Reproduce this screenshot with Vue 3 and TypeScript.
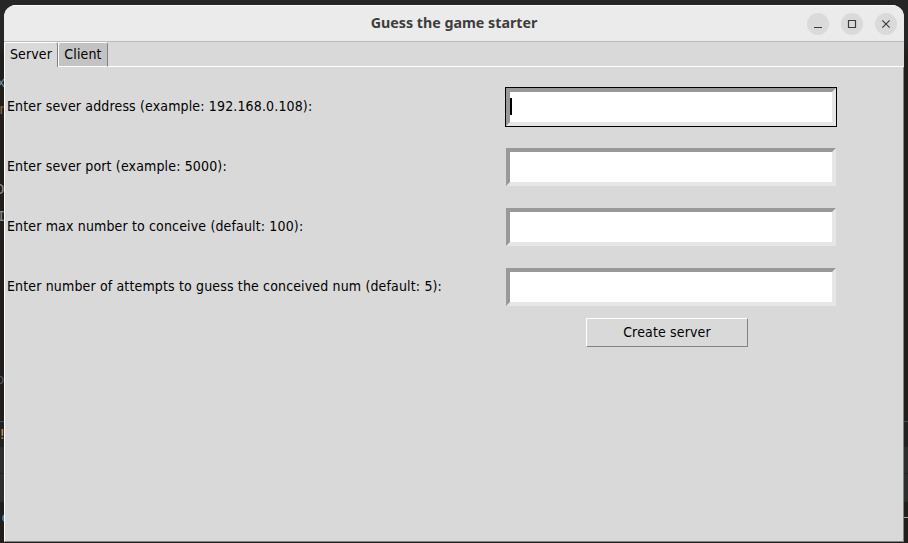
<script setup lang="ts">
import { ref } from 'vue'

interface Field {
  id: string
  label: string
  value: string
}

const tabs: string[] = ['Server', 'Client']
const activeTab = ref<string>('Server')
const fields = ref<Field[]>([
  { id: 'address', label: 'Enter sever address (example: 192.168.0.108):', value: '' },
  { id: 'port', label: 'Enter sever port (example: 5000):', value: '' },
  { id: 'max', label: 'Enter max number to conceive (default: 100):', value: '' },
  { id: 'attempts', label: 'Enter number of attempts to guess the conceived num (default: 5):', value: '' },
])
const focused = ref<string>('address')
</script>

<template>
  <div class="desktop">
    <div class="backdrop" aria-hidden="true">
      <span class="frag x">x</span>
      <span class="frag r">r</span>
      <span class="frag o">D</span>
      <span class="frag i">I</span>
      <span class="frag c">o</span>
      <div class="panel"></div>
      <span class="frag bang">!</span>
      <span class="dot"></span>
      <div class="rule"></div>
    </div>
    <section class="window">
      <header class="titlebar">
        <h1 class="title">Guess the game starter</h1>
        <div class="controls">
          <button class="control" aria-label="Minimize">
            <svg viewBox="0 0 22 22"><path d="M7 14.5h8" /></svg>
          </button>
          <button class="control" aria-label="Maximize">
            <svg viewBox="0 0 22 22"><path d="M7.5 7.5h7v7h-7z" /></svg>
          </button>
          <button class="control" aria-label="Close">
            <svg viewBox="0 0 22 22"><path d="M7.3 7.3l7.4 7.4M14.7 7.3l-7.4 7.4" /></svg>
          </button>
        </div>
      </header>
      <nav class="tabs">
        <button
          v-for="tab in tabs"
          :key="tab"
          class="tab"
          :class="{ active: tab === activeTab }"
          @click="activeTab = tab"
        >{{ tab }}</button>
        <span class="tabs-rest"></span>
      </nav>
      <main class="page">
        <div v-for="f in fields" :key="f.id" class="row">
          <label class="label" :for="f.id">{{ f.label }}</label>
          <div class="ring" :class="{ focused: f.id === focused }">
            <div class="entry">
              <span v-if="f.id === focused" class="caret"></span>
              <input :id="f.id" v-model="f.value" class="input" @focus="focused = f.id" />
            </div>
          </div>
        </div>
        <div class="actions">
          <button class="create">Create server</button>
        </div>
      </main>
    </section>
  </div>
</template>

<style>
body {
  background: #222;
  overflow: hidden;
}
</style>

<style scoped>
* {
  box-sizing: border-box;
}
.desktop {
  position: relative;
  width: 908px;
  height: 543px;
  padding: 5px 4px 1px;
  overflow: hidden;
  background: linear-gradient(#262626 0 42px, #211e1b 60px);
  font-family: 'DejaVu Sans Condensed', 'DejaVu Sans', sans-serif;
  font-stretch: condensed;
  font-size: 14px;
  letter-spacing: 0.15px;
  color: #000;
}
.backdrop {
  position: absolute;
  inset: 0;
}
.frag {
  position: absolute;
  left: -4px;
  font: 14px/16px 'DejaVu Sans Mono', monospace;
  color: #8a8a8a;
}
.x { top: 74px; left: -3px; color: #6a8fa8; }
.r { top: 101px; left: -2px; color: #8c6248; }
.o { top: 181px; }
.i { top: 208px; left: -3px; }
.c { top: 371px; color: #555; }
.bang { top: 426px; left: -2px; color: #c99257; }
.panel {
  position: absolute;
  top: 421px;
  left: 0;
  right: 0;
  height: 81px;
  border-top: 1px solid #4a4a4a;
  background: linear-gradient(#222 0 25px, #2d2e2e 25px 51px, #222 51px 52px, #2d2e2e 52px);
}
.dot {
  position: absolute;
  top: 514px;
  left: 2px;
  width: 8px;
  height: 8px;
  border-radius: 50%;
  background: #477ba6;
}
.rule {
  position: absolute;
  top: 517px;
  right: 0;
  width: 4px;
  height: 1px;
  background: #aaa;
}
.window {
  position: relative;
  display: flex;
  flex-direction: column;
  width: 900px;
  height: 537px;
  border-radius: 12px 12px 0 0;
  overflow: hidden;
  background: #d9d9d9;
}
.titlebar {
  display: grid;
  grid-template-columns: 1fr auto 1fr;
  align-items: center;
  height: 37px;
  padding-right: 7px;
  background: #ebebeb;
  border-top: 1px solid #f9f9f9;
  border-bottom: 1px solid #bcbcbc;
}
.title {
  grid-column: 2;
  margin: 0 0 2px 7px;
  font: bold 14.25px/20px 'Noto Sans', sans-serif;
  letter-spacing: 0;
  color: #3d3d3d;
  white-space: nowrap;
}
.controls {
  display: flex;
  justify-content: flex-end;
  gap: 12px;
}
.control {
  width: 22px;
  height: 22px;
  padding: 0;
  border: 0;
  border-radius: 50%;
  background: #dadada;
}
.control svg {
  display: block;
  width: 22px;
  height: 22px;
  fill: none;
  stroke: #3d3d3d;
  stroke-width: 1.2;
}
.tabs {
  display: flex;
  height: 25px;
}
.tab {
  height: 25px;
  width: 50px;
  margin-left: 0;
  padding: 0 0 1px;
  border: 1px solid #fff;
  border-right-color: #828282;
  border-radius: 2px 3px 0 0;
  background: #c3c3c3;
  font: inherit;
  letter-spacing: inherit;
  line-height: 21px;
  color: #000;
}
.tab.active {
  width: 54px;
  border-bottom: 0;
  background: #d9d9d9;
}
.tabs-rest {
  flex: 1;
  border-bottom: 1px solid #fff;
}
.page {
  flex: 1;
  padding-top: 10px;
  border-left: 1px solid #fff;
  border-right: 1px solid #828282;
  border-bottom: 1px solid #828282;
}
.row {
  display: flex;
  align-items: center;
  height: 60px;
}
.label {
  width: 500px;
  padding-left: 2px;
  line-height: 18px;
  padding-bottom: 2px;
  white-space: nowrap;
}
.ring {
  width: 332px;
  height: 40px;
  border: 1px solid transparent;
}
.ring.focused {
  border-color: #000;
}
.entry {
  display: flex;
  align-items: center;
  height: 38px;
  border: 4px solid;
  border-color: #999 #e6e6e6 #e6e6e6 #999;
  background: #fff;
}
.caret {
  width: 2px;
  height: 17px;
  margin-bottom: 1px;
  background: #000;
}
.input {
  flex: 1;
  min-width: 0;
  height: 28px;
  padding: 0;
  border: 0;
  outline: 0;
  background: transparent;
  font: inherit;
}
.actions {
  display: flex;
  padding: 1px 0 0 581px;
}
.create {
  width: 162px;
  height: 29px;
  padding: 0 0 2px;
  border: 1px solid;
  border-color: #fff #828282 #828282 #fff;
  background: #d9d9d9;
  font: inherit;
  letter-spacing: inherit;
  color: #000;
}
</style>
